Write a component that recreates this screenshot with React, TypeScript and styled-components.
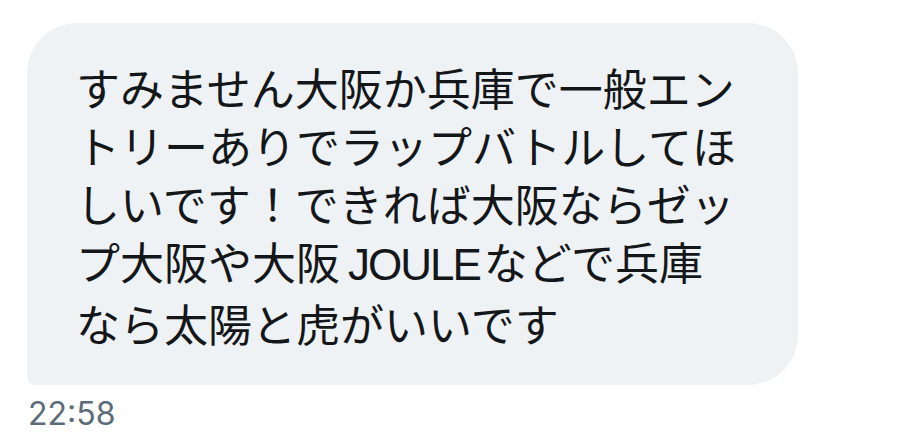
import React from "react";
import styled, { createGlobalStyle } from "styled-components";

const Global = createGlobalStyle`
  html, body { margin: 0; padding: 0; background: #ffffff; }
  body { width: 900px; height: 444px; overflow: hidden; }
`;

const Page = styled.div`
  display: flex;
  flex-direction: column;
  align-items: flex-start;
  padding: 23px 0 0 27px;
`;

const Bubble = styled.div`
  box-sizing: border-box;
  width: 771px;
  height: 362px;
  background: #eff2f4;
  border-radius: 50px 50px 50px 8px;
  padding: 35px 0 0 49px;
  font-family: "Noto Sans CJK JP", "Noto Sans", sans-serif;
  font-size: 44px;
  line-height: 58px;
  color: #14171a;
`;

const Line = styled.div`
  white-space: nowrap;
`;

const Latin = styled.span`
  font-family: "Liberation Sans", "Noto Sans CJK JP", sans-serif;
  letter-spacing: -2px;
  margin-left: 8px;
  margin-right: 4px;
`;

const Time = styled.div`
  margin-top: 13px;
  margin-left: 1px;
  font-family: Inter, "Noto Sans", sans-serif;
  font-size: 32px;
  line-height: 32px;
  color: #5b6b78;
`;

export default function App() {
  return (
    <>
      <Global />
      <Page>
        <Bubble>
          <Line>すみません大阪か兵庫で一般エン</Line>
          <Line>トリーありでラップバトルしてほ</Line>
          <Line>しいです！できれば大阪ならゼッ</Line>
          <Line>
            プ大阪や大阪<Latin>JOULE</Latin>などで兵庫
          </Line>
          <Line>なら太陽と虎がいいです</Line>
        </Bubble>
        <Time>22:58</Time>
      </Page>
    </>
  );
}
